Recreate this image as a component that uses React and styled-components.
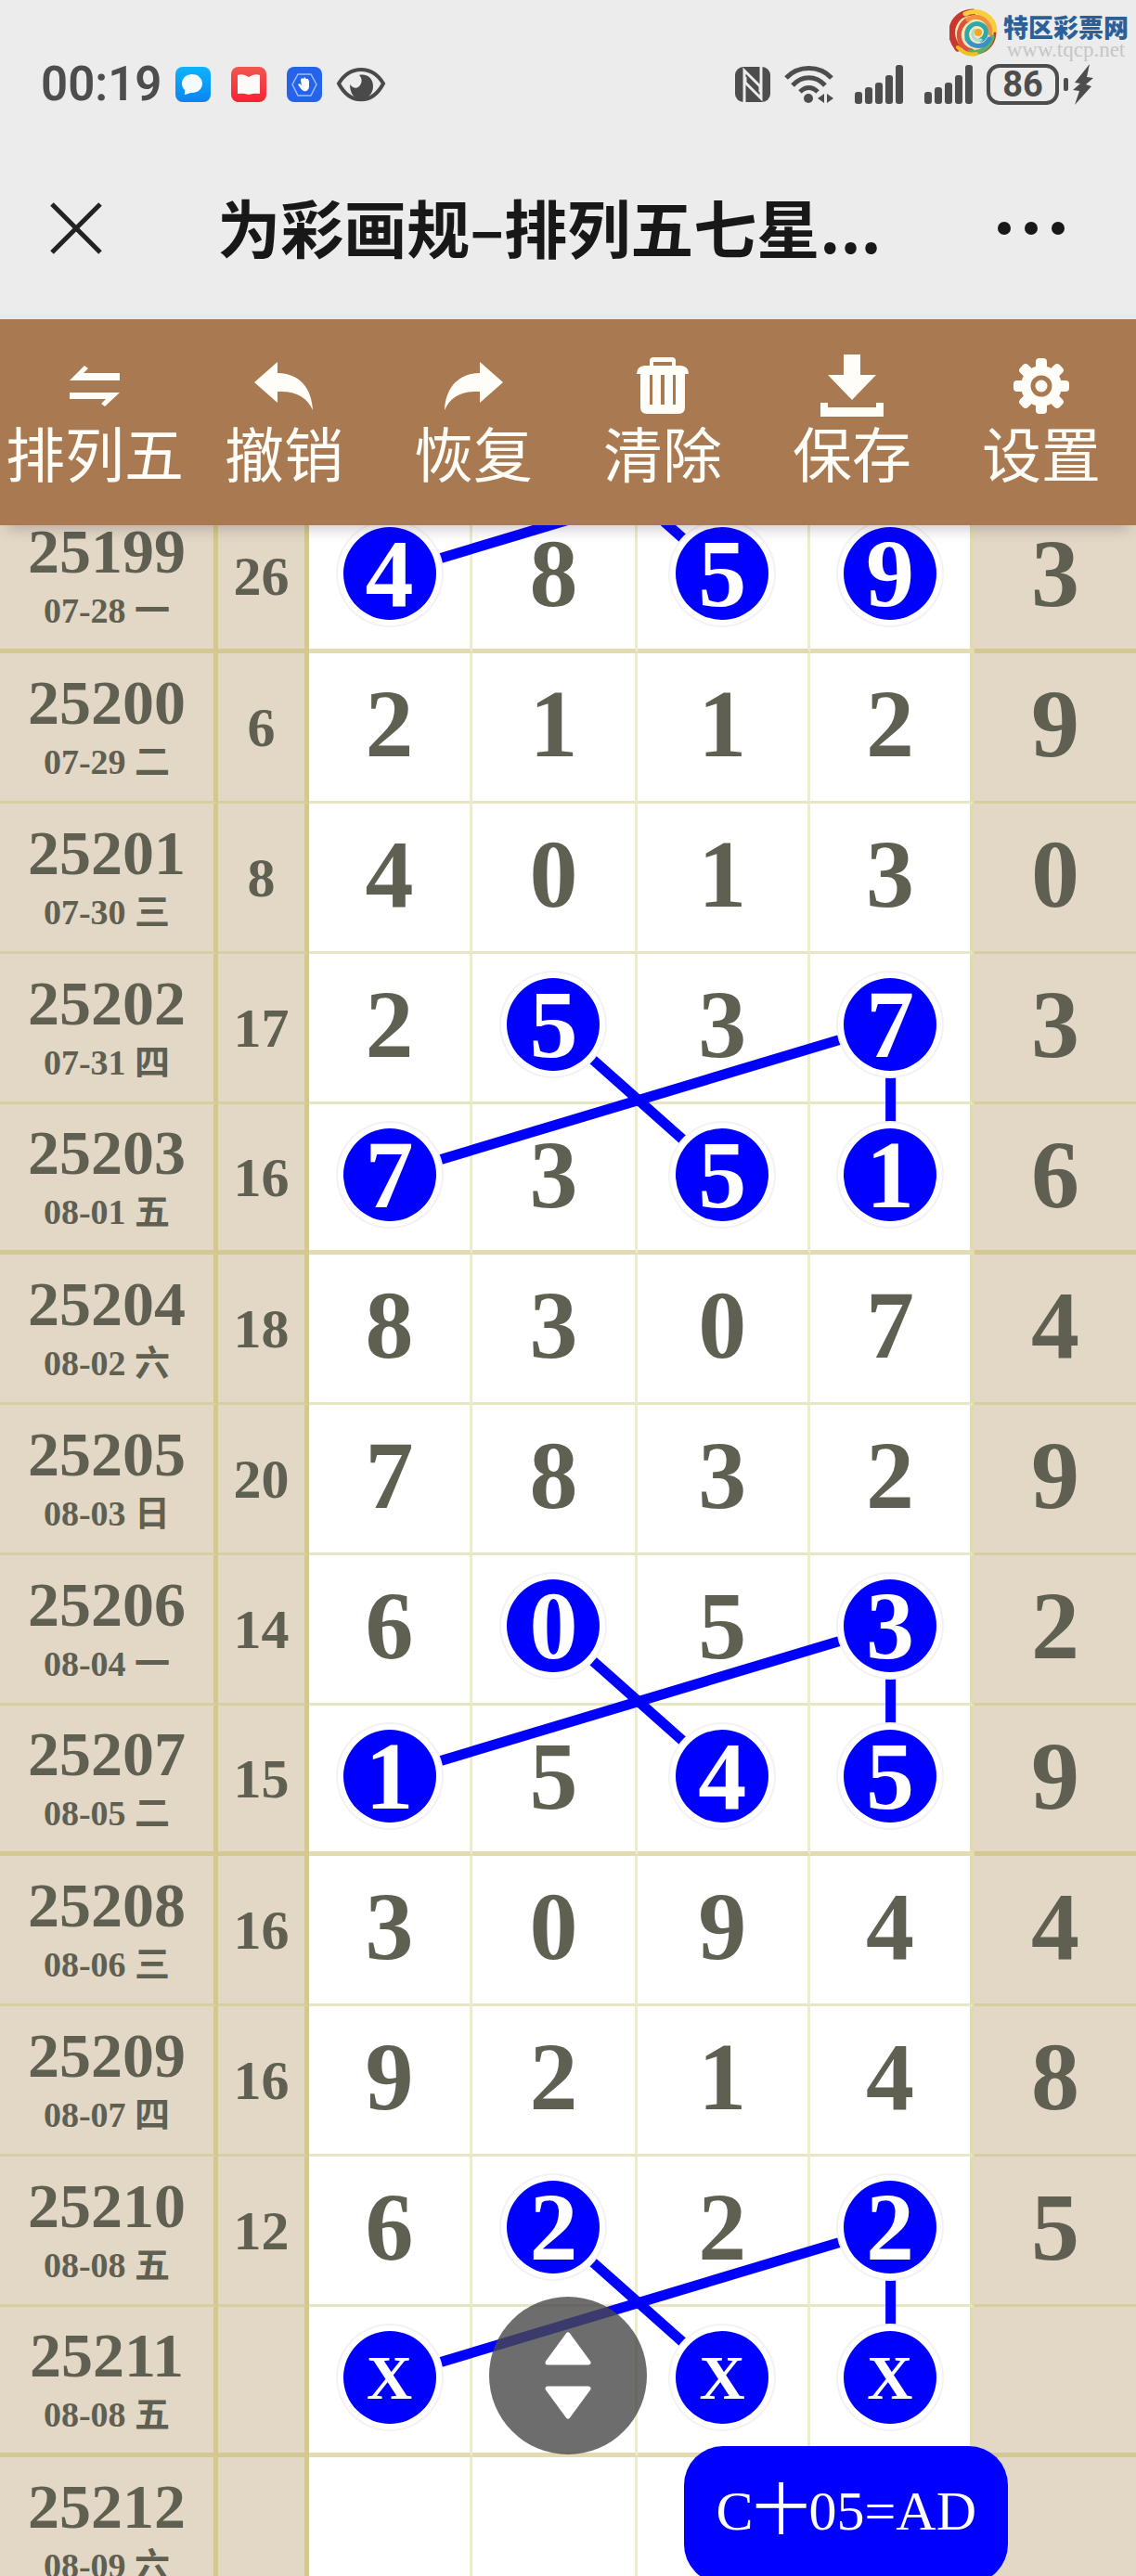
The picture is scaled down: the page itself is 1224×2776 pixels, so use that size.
import { Fragment } from 'react';
import styled, { createGlobalStyle } from 'styled-components';

const ROW_HEIGHT = 162;
const ROW_CENTER = 76;

// nums: 前四位, last: 第五位, hit: 画圈的位置
const rows = [
  { issue: '25199', date: '07-28 一', sum: '26', nums: ['4', '8', '5', '9'], last: '3', hit: [0, 2, 3], thick: true },
  { issue: '25200', date: '07-29 二', sum: '6', nums: ['2', '1', '1', '2'], last: '9', hit: [] },
  { issue: '25201', date: '07-30 三', sum: '8', nums: ['4', '0', '1', '3'], last: '0', hit: [] },
  { issue: '25202', date: '07-31 四', sum: '17', nums: ['2', '5', '3', '7'], last: '3', hit: [1, 3] },
  { issue: '25203', date: '08-01 五', sum: '16', nums: ['7', '3', '5', '1'], last: '6', hit: [0, 2, 3], thick: true },
  { issue: '25204', date: '08-02 六', sum: '18', nums: ['8', '3', '0', '7'], last: '4', hit: [] },
  { issue: '25205', date: '08-03 日', sum: '20', nums: ['7', '8', '3', '2'], last: '9', hit: [] },
  { issue: '25206', date: '08-04 一', sum: '14', nums: ['6', '0', '5', '3'], last: '2', hit: [1, 3] },
  { issue: '25207', date: '08-05 二', sum: '15', nums: ['1', '5', '4', '5'], last: '9', hit: [0, 2, 3], thick: true },
  { issue: '25208', date: '08-06 三', sum: '16', nums: ['3', '0', '9', '4'], last: '4', hit: [] },
  { issue: '25209', date: '08-07 四', sum: '16', nums: ['9', '2', '1', '4'], last: '8', hit: [] },
  { issue: '25210', date: '08-08 五', sum: '12', nums: ['6', '2', '2', '2'], last: '5', hit: [1, 3] },
  { issue: '25211', date: '08-08 五', sum: '', nums: ['X', '', 'X', 'X'], last: '', hit: [0, 2, 3], thick: true },
  { issue: '25212', date: '08-09 六', sum: '', nums: ['', '', '', ''], last: '', hit: [] },
];

// 每组连线的起始行
const groups = [-1, 3, 7, 11];

const columns = { a: '34.3%', b: '48.7%', c: '63.6%', d: '78.4%' };

const tools = [
  { label: '排列五', icon: <SwapIcon /> },
  { label: '撤销', icon: <UndoIcon /> },
  { label: '恢复', icon: <RedoIcon /> },
  { label: '清除', icon: <TrashIcon /> },
  { label: '保存', icon: <SaveIcon /> },
  { label: '设置', icon: <GearIcon /> },
];

function App() {
  return (
    <Page>
      <GlobalStyle />
      <StatusBar>
        <StatusGroup>
          <Clock>00:19</Clock>
          <AppIcons>
            <ChatIcon />
            <BookIcon />
            <GuardIcon />
          </AppIcons>
          <EyeIcon />
        </StatusGroup>
        <StatusGroup>
          <NfcIcon />
          <WifiIcon />
          <Signals>
            <SignalIcon />
            <SignalIcon />
          </Signals>
          <Battery>
            <BatteryLevel>86</BatteryLevel>
            <BatteryTip />
            <BoltIcon />
          </Battery>
        </StatusGroup>
      </StatusBar>
      <Watermark>
        <SwirlLogo />
        <SiteInfo>
          <SiteName>特区彩票网</SiteName>
          <SiteUrl>www.tqcp.net</SiteUrl>
        </SiteInfo>
      </Watermark>

      <NavBar>
        <IconButton aria-label='关闭'>
          <svg width='56' height='56' viewBox='0 0 56 56'>
            <path d='M2 2L54 54M54 2L2 54' stroke='#222' strokeWidth='5' />
          </svg>
        </IconButton>
        <Title>为彩画规–排列五七星...</Title>
        <IconButton aria-label='更多'>
          <svg width='74' height='16' viewBox='0 0 74 16' fill='#181818'>
            <circle cx='8' cy='8' r='7' />
            <circle cx='37' cy='8' r='7' />
            <circle cx='66' cy='8' r='7' />
          </svg>
        </IconButton>
      </NavBar>

      <Toolbar>
        {tools.map((tool) => (
          <ToolButton key={tool.label}>
            <ToolIcon>{tool.icon}</ToolIcon>
            {tool.label}
          </ToolButton>
        ))}
      </Toolbar>

      <Board>
        <Chart>
          <Table>
            <colgroup>
              <Col $width='19.2%' />
              <Col $width='8%' />
              <Col $width='14.4%' />
              <Col $width='14.5%' />
              <Col $width='15.2%' />
              <Col $width='14.5%' />
              <Col $width='14.2%' />
            </colgroup>
            <tbody>
              {rows.map((row) => (
                <tr key={row.issue}>
                  <IssueCell scope='row' $thick={row.thick}>
                    <Issue>{row.issue}</Issue>
                    <IssueDate>{row.date}</IssueDate>
                  </IssueCell>
                  <SumCell $thick={row.thick}>{row.sum}</SumCell>
                  {row.nums.map((num, i) => (
                    <NumCell key={i} $thick={row.thick} $edge={i === 3}>
                      {row.hit.includes(i) ? <Ball $mark={num === 'X'}>{num}</Ball> : num}
                    </NumCell>
                  ))}
                  <LastCell $thick={row.thick}>{row.last}</LastCell>
                </tr>
              ))}
            </tbody>
          </Table>
          <Links />
          <Formula>C十05=AD</Formula>
        </Chart>
      </Board>

      <ScrollButton aria-label='滚动'>
        <svg width='52' height='96' viewBox='0 0 52 96' fill='#fff' stroke='#fff' strokeWidth='5' strokeLinejoin='round'>
          <path d='M26 4L48 34H4Z' />
          <path d='M26 92L48 62H4Z' />
        </svg>
      </ScrollButton>
    </Page>
  );
}

export default App;

function Links() {
  return (
    <LinkLayer>
      {groups.map((start) => {
        const top = start * ROW_HEIGHT + ROW_CENTER;
        const bottom = top + ROW_HEIGHT;
        return (
          <Fragment key={start}>
            <line x1={columns.d} y1={top} x2={columns.a} y2={bottom} />
            <line x1={columns.b} y1={top} x2={columns.c} y2={bottom} />
            <line x1={columns.d} y1={top} x2={columns.d} y2={bottom} />
          </Fragment>
        );
      })}
    </LinkLayer>
  );
}

function SwapIcon() {
  return (
    <svg width='54' height='44' viewBox='0 0 54 44' fill='currentColor'>
      <path d='M0 16L16 0L20 3L15 8H54V16Z' />
      <path d='M54 29L38 44L34 41L39 36H0V29Z' />
    </svg>
  );
}

function UndoIcon() {
  return (
    <svg width='64' height='52' viewBox='0 0 64 52' fill='currentColor'>
      <path d='M0 22L25 0V12C48 12 62 28 63 52C57 38 45 31 25 32V44Z' />
    </svg>
  );
}

function RedoIcon() {
  return (
    <svg width='64' height='52' viewBox='0 0 64 52' fill='currentColor'>
      <path d='M64 22L39 0V12C16 12 2 28 1 52C7 38 19 31 39 32V44Z' />
    </svg>
  );
}

function TrashIcon() {
  return (
    <svg width='56' height='62' viewBox='0 0 56 62' fill='currentColor'>
      <path fillRule='evenodd' d='M14 9V4Q14 0 18 0H38Q42 0 42 4V9H48Q56 10 56 18H52V54Q52 61 45 61H11Q4 61 4 54V18H0Q0 10 8 9ZM18 9H38V5H18ZM14 19V51H17V19ZM26 19V51H30V19ZM39 19V51H42V19Z' />
    </svg>
  );
}

function SaveIcon() {
  return (
    <svg width='68' height='68' viewBox='0 0 68 68' fill='currentColor'>
      <path d='M25 0H43V22H60L34 49L8 22H25Z' />
      <path d='M0 52H8V57H60V52H68V67H0Z' />
    </svg>
  );
}

function GearIcon() {
  return (
    <svg width='62' height='62' viewBox='-31 -31 62 62' fill='currentColor'>
      {[0, 45, 90, 135].map((angle) => (
        <rect key={angle} x='-6' y='-30' width='12' height='60' rx='4' transform={`rotate(${angle})`} />
      ))}
      <circle r='22' />
      <circle r='9' fill='none' stroke='#a97952' strokeWidth='5' />
    </svg>
  );
}

function ChatIcon() {
  return (
    <svg width='38' height='38' viewBox='0 0 38 38'>
      <defs>
        <linearGradient id='chat' x1='0' y1='0' x2='0' y2='1'>
          <stop offset='0' stopColor='#0cb4fb' />
          <stop offset='1' stopColor='#0a84f2' />
        </linearGradient>
      </defs>
      <rect width='38' height='38' rx='8' fill='url(#chat)' />
      <path d='M18 8C25 8 29 13 29 18C29 24 24 28 18 28C15 28 14 29 10 30C9 29 11 27 10 25C8 23 7 21 7 18C7 12 12 8 18 8Z' fill='#f2fbff' />
    </svg>
  );
}

function BookIcon() {
  return (
    <svg width='38' height='38' viewBox='0 0 38 38'>
      <defs>
        <linearGradient id='book' x1='0' y1='0' x2='0' y2='1'>
          <stop offset='0' stopColor='#f0584e' />
          <stop offset='1' stopColor='#fa2136' />
        </linearGradient>
      </defs>
      <rect width='38' height='38' rx='8' fill='url(#book)' />
      <path d='M7 9Q13 7 19 11Q25 7 31 9V29Q25 28 19 30Q13 28 7 29Z' fill='#fffafa' />
    </svg>
  );
}

function GuardIcon() {
  return (
    <svg width='38' height='38' viewBox='0 0 38 38'>
      <rect width='38' height='38' rx='8' fill='#2463ea' />
      <path d='M12 8H26L32 19L26 31H12L6 19Z' fill='none' stroke='#9cc0ff' strokeWidth='1.5' />
      <path d='M15 14L16 12L18 13L19 11L21 13L23 13L24 16V21C24 25 21 27 18 26C16 25 14 22 12 19L14 18L16 20Z' fill='#fff' />
    </svg>
  );
}

function EyeIcon() {
  return (
    <svg width='54' height='38' viewBox='0 0 54 38'>
      <path d='M3 18C15 -2 39 -2 51 18C39 41 15 41 3 18Z' fill='none' stroke='#4a4a4a' strokeWidth='4' />
      <path d='M25 9C34 7 40 13 40 21C40 29 34 35 27 35C20 35 15 29 15 19C18 23 22 24 25 21C29 17 28 12 25 9Z' fill='#4a4a4a' />
    </svg>
  );
}

function NfcIcon() {
  return (
    <svg width='38' height='38' viewBox='0 0 38 38'>
      <rect width='38' height='38' rx='9' fill='#4d4d4d' />
      <path d='M10 38V4L27 21V27' fill='none' stroke='#ececec' strokeWidth='3' />
      <path d='M28 0V34L11 17V11' fill='none' stroke='#ececec' strokeWidth='3' />
    </svg>
  );
}

function WifiIcon() {
  return (
    <svg width='53' height='42' viewBox='0 0 53 42' fill='none' stroke='#4d4d4d' strokeWidth='5'>
      <path d='M2 14C15 0 38 0 51 14' />
      <path d='M9 22C19 11 34 11 44 22' />
      <path d='M17 29C23 23 30 23 36 29' />
      <circle cx='26' cy='36' r='5' fill='#4d4d4d' stroke='none' />
      <path d='M43 31V41L36 36ZM46 31V41L53 36Z' fill='#4d4d4d' stroke='none' />
    </svg>
  );
}

function SignalIcon() {
  return (
    <svg width='52' height='42' viewBox='0 0 52 42' fill='#4d4d4d'>
      {[13, 18, 23, 31, 42].map((h, i) => (
        <rect key={h} x={i * 11} y={42 - h} width='8' height={h} rx='3' />
      ))}
    </svg>
  );
}

function BoltIcon() {
  return (
    <svg width='22' height='44' viewBox='0 0 22 44' fill='#4d4d4d'>
      <path d='M18 0L2 20L8 21L0 28L7 29L2 44L20 24L14 22L22 15L15 14Z' />
    </svg>
  );
}

function SwirlLogo() {
  return (
    <svg width='52' height='52' viewBox='0 0 52 52' fill='none' strokeLinecap='round'>
      <circle cx='26' cy='26' r='25' fill='#f9e6bd' />
      <path d='M9 43C-4 26 4 5 25 4' stroke='#c9382f' strokeWidth='7' />
      <path d='M24 46C7 42 6 20 20 12' stroke='#d9543a' strokeWidth='5' />
      <path d='M17 6C31 -1 49 8 49 25' stroke='#f8cf3a' strokeWidth='5' />
      <path d='M20 12C34 4 45 16 44 27' stroke='#f2923a' strokeWidth='5' />
      <path d='M49 27C48 42 36 50 23 48' stroke='#b5432f' strokeWidth='3' />
      <path d='M46 31C43 43 33 49 22 47' stroke='#58b06a' strokeWidth='5' />
      <path d='M9 42C16 50 24 50 29 49' stroke='#efc21f' strokeWidth='4' />
      <path d='M43 33C37 44 24 42 19 33' stroke='#3c8fc8' strokeWidth='5' />
      <path d='M20 34C15 22 26 13 35 18C42 22 40 31 34 34' stroke='#2fa9a7' strokeWidth='5' />
      <path d='M34 34C27 36 22 28 27 23' stroke='#a6dcd6' strokeWidth='3' />
      <circle cx='31' cy='26' r='4' fill='#f3a62a' />
    </svg>
  );
}

const GlobalStyle = createGlobalStyle`
  * {
    box-sizing: border-box;
  }
  body {
    margin: 0;
    background: #ececec;
    font-family: 'Noto Sans CJK SC', 'Liberation Sans', sans-serif;
  }
  button {
    padding: 0;
    border: 0;
    background: none;
    color: inherit;
    font: inherit;
    cursor: pointer;
  }
  svg {
    display: block;
    flex-shrink: 0;
  }
`;

const Page = styled.div`
  position: relative;
  display: flex;
  flex-direction: column;
  height: 100vh;
  overflow: hidden;
`;

const StatusBar = styled.div`
  display: flex;
  flex-shrink: 0;
  justify-content: space-between;
  align-items: center;
  height: 148px;
  padding: 34px 46px 0 44px;
  color: #4d4d4d;
`;

const StatusGroup = styled.div`
  display: flex;
  align-items: center;
  gap: 15px;
`;

const Clock = styled.span`
  font-family: Roboto, sans-serif;
  font-size: 51px;
  font-weight: 600;
  line-height: 60px;
`;

const AppIcons = styled.div`
  display: flex;
  gap: 22px;
`;

const Signals = styled.div`
  display: flex;
  gap: 23px;
  margin-left: 8px;
`;

const Battery = styled.div`
  display: flex;
  align-items: center;
  gap: 5px;
`;

const BatteryLevel = styled.span`
  width: 78px;
  border: 4px solid #4d4d4d;
  border-radius: 14px;
  font-family: Roboto, sans-serif;
  font-size: 38px;
  font-weight: 700;
  line-height: 36px;
  text-align: center;
`;

const BatteryTip = styled.span`
  width: 5px;
  height: 14px;
  border-radius: 2px;
  background: #4d4d4d;
`;

const Watermark = styled.div`
  position: absolute;
  top: 9px;
  right: 8px;
  display: flex;
  gap: 6px;
`;

const SiteInfo = styled.div`
  padding-top: 6px;
`;

const SiteName = styled.div`
  color: #2a6099;
  font-size: 27px;
  font-weight: 900;
  line-height: 28px;
`;

const SiteUrl = styled.div`
  color: #c6c6c6;
  font-family: 'Liberation Serif', serif;
  font-size: 23px;
  line-height: 22px;
  text-align: center;
`;

const NavBar = styled.header`
  display: flex;
  flex-shrink: 0;
  align-items: center;
  height: 196px;
  padding: 5px 76px 0 54px;
  border-bottom: 5px solid #e3e9f0;
`;

const IconButton = styled.button`
  display: flex;
`;

const Title = styled.h1`
  flex: 1;
  margin: 0;
  padding-bottom: 4px;
  color: #181818;
  font-size: 68px;
  font-weight: 700;
  line-height: 100px;
  text-align: center;
  white-space: nowrap;
`;

const Toolbar = styled.nav`
  position: relative;
  z-index: 5;
  display: grid;
  flex-shrink: 0;
  grid-template-columns: repeat(6, 1fr);
  height: 222px;
  background: #a97952;
  box-shadow: 0 12px 14px -8px rgba(60, 40, 60, 0.25);
  color: #fffdf8;
`;

const ToolButton = styled.button`
  display: flex;
  flex-direction: column;
  align-items: center;
  padding-top: 38px;
  font-size: 64px;
  line-height: 72px;
  white-space: nowrap;
`;

const ToolIcon = styled.span`
  display: flex;
  align-items: center;
  height: 68px;
`;

const Board = styled.main`
  flex: 1;
  min-height: 0;
  overflow: hidden;
`;

// 首行有一部分滚动到工具栏下面
const Chart = styled.div`
  position: relative;
  margin-top: -24px;
`;

const Table = styled.table`
  width: 100%;
  table-layout: fixed;
  border-collapse: separate;
  border-spacing: 0;
  color: #5f5f52;
  font-family: 'Liberation Serif', 'Noto Sans CJK SC', serif;
  font-weight: 700;
  text-align: center;

  th,
  td {
    height: ${ROW_HEIGHT}px;
  }
`;

const Col = styled.col`
  width: ${(props) => props.$width};
`;

const NumCell = styled.td`
  padding: 0 0 ${(props) => (props.$thick ? 5 : 7)}px;
  border-right: ${(props) => (props.$edge ? 5 : 3)}px solid ${(props) => (props.$edge ? 'rgba(196, 186, 90, 0.5)' : 'rgba(200, 200, 130, 0.35)')};
  border-bottom: ${(props) => (props.$thick ? '5px solid rgba(196, 182, 90, 0.48)' : '3px solid rgba(192, 192, 100, 0.38)')};
  background: #fff;
  font-size: 104px;
  line-height: 104px;
`;

const LastCell = styled(NumCell)`
  border-right: 0;
  background: #e3d8c6;
`;

const SumCell = styled(NumCell)`
  border-right: 5px solid rgba(196, 186, 90, 0.5);
  background: #e3d8c6;
  font-size: 60px;
  padding-bottom: 0;
`;

const IssueCell = styled(SumCell).attrs({ as: 'th' })`
  padding-top: 7px;
  line-height: 64px;
`;

const Issue = styled.div`
  font-size: 68px;
  line-height: 68px;
`;

const IssueDate = styled.div`
  font-size: 38px;
  line-height: 60px;
`;

const Ball = styled.span`
  position: relative;
  z-index: 2;
  display: block;
  width: 100px;
  height: 100px;
  margin: 0 auto;
  border-radius: 50%;
  background: #00f;
  box-shadow: 0 0 0 6px #fff, 0 0 0 8px #f3f1f4;
  color: #fff;
  font-size: ${(props) => (props.$mark ? 68 : 104)}px;
  line-height: 100px;
`;

const LinkLayer = styled.svg`
  position: absolute;
  inset: 0;
  z-index: 1;
  width: 100%;
  height: 100%;
  stroke: #00f;
  stroke-width: 11px;
  pointer-events: none;
`;

const Formula = styled.div`
  position: absolute;
  z-index: 2;
  top: 2094px;
  right: 138px;
  height: 148px;
  padding: 32px 34px;
  border-radius: 42px;
  background: #00f;
  color: #fff;
  font-family: 'Liberation Serif', 'Noto Sans CJK SC', serif;
  font-size: 60px;
  line-height: 76px;
  white-space: nowrap;
`;

const ScrollButton = styled.button`
  position: absolute;
  z-index: 4;
  bottom: 131px;
  left: 50%;
  display: flex;
  justify-content: center;
  align-items: center;
  width: 170px;
  height: 170px;
  transform: translateX(-50%);
  border-radius: 50%;
  background: rgba(72, 72, 72, 0.8);
`;
